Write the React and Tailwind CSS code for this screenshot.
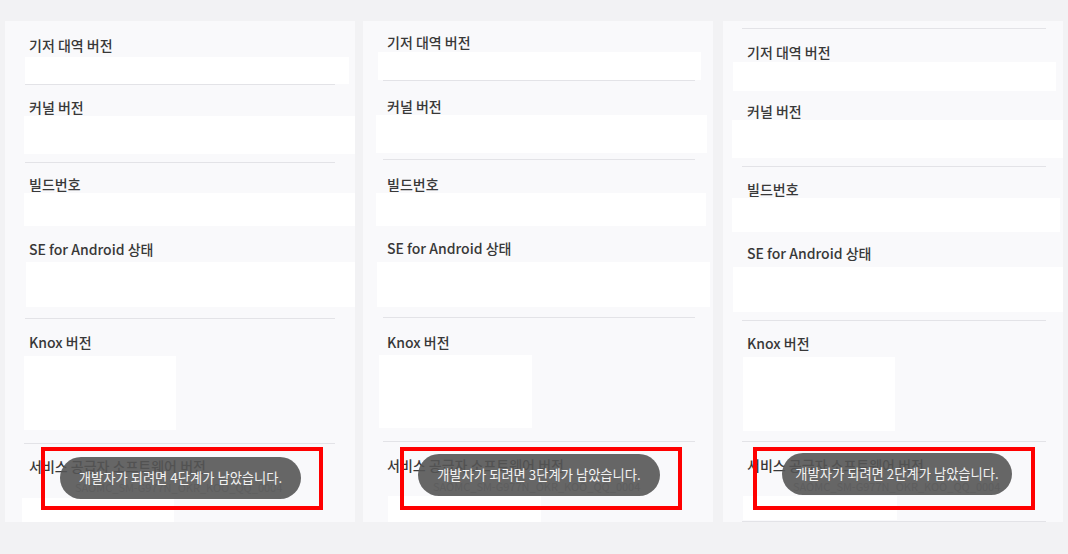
import React from 'react';

const font = { fontFamily: '"Noto Sans CJK KR", "Noto Sans", sans-serif' };

const Label = ({ children, className = '' }) => (
  <div className={`pl-[24px] text-[14px] leading-[18px] font-medium text-[#383838] whitespace-nowrap ${className}`}>
    {children}
  </div>
);

const Block = ({ className = '' }) => <div className={`bg-white shrink-0 ${className}`} />;

const Divider = ({ className = '' }) => <div className={`h-px bg-[#e3e3e7] shrink-0 ${className}`} />;

// toast pill, slightly see-through like the Android one
const Toast = ({ step, className = '' }) => (
  <div
    className={`absolute h-[42px] rounded-full bg-[#555555]/90 flex items-center justify-center text-[13.3px] text-[#f2f2f2] whitespace-nowrap ${className}`}
  >
    개발자가 되려면 {step}단계가 남았습니다.
  </div>
);

const Highlight = ({ className = '' }) => (
  <div className={`absolute w-[282px] h-[63px] border-[4px] border-[#ff0000] ${className}`} />
);

const Hint = ({ children, className = '' }) => (
  <div className={`text-[11px] leading-[13px] text-[#a8a8ad] whitespace-nowrap ${className}`}>{children}</div>
);

const PanelOne = () => (
  <div className="relative w-[350px] h-[501px] bg-[#f9f9fb] flex flex-col overflow-hidden">
    <Label className="mt-[15px]">기저 대역 버전</Label>
    <Block className="mt-[3px] h-[27px] ml-[20px] mr-[6px]" />
    <Divider className="ml-[20px] mr-[20px]" />
    <Label className="mt-[13px]">커널 버전</Label>
    <Block className="h-[38px] ml-[19px]" />
    <Divider className="mt-[8px] ml-[20px] mr-[20px]" />
    <Label className="mt-[12px]">빌드번호</Label>
    <Block className="h-[33px] ml-[19px]" />
    <Label className="mt-[14px]">SE for Android 상태</Label>
    <Block className="mt-[4px] h-[45px] ml-[21px]" />
    <Divider className="mt-[11px] ml-[20px] mr-[20px]" />
    <Label className="mt-[14px]">Knox 버전</Label>
    <Block className="mt-[5px] h-[74px] ml-[19px] w-[152px]" />
    <Divider className="mt-[13px] ml-[19px] mr-[20px]" />
    <Label className="mt-[13px]">서비스 공급자 소프트웨어 버전</Label>
    <Hint className="mt-[6px] pl-[70px]">SAOMC_SM-G977N_OKR_KOO_QQ_0004</Hint>
    <Block className="mt-[4px] h-[24px] ml-[17px] w-[152px]" />
    <Toast step={4} className="left-[55px] top-[436px] w-[241px]" />
    <Highlight className="left-[36px] top-[426px]" />
  </div>
);

const PanelTwo = () => (
  <div className="relative w-[350px] h-[501px] bg-[#f9f9fb] flex flex-col overflow-hidden">
    <Label className="mt-[12px]">기저 대역 버전</Label>
    <Block className="mt-[1px] h-[28px] ml-[15px] mr-[12px]" />
    <Divider className="ml-[20px] mr-[18px]" />
    <Label className="mt-[16px]">커널 버전</Label>
    <Block className="h-[38px] ml-[13px] mr-[6px]" />
    <Divider className="mt-[6px] ml-[20px] mr-[18px]" />
    <Label className="mt-[15px]">빌드번호</Label>
    <Block className="h-[33px] ml-[13px] mr-[7px]" />
    <Label className="mt-[13px]">SE for Android 상태</Label>
    <Block className="mt-[5px] h-[45px] ml-[14px] mr-[3px]" />
    <Divider className="mt-[10px] ml-[20px] mr-[18px]" />
    <Label className="mt-[15px]">Knox 버전</Label>
    <Block className="mt-[4px] h-[73px] ml-[16px] w-[153px]" />
    <Divider className="mt-[13px] ml-[20px] mr-[18px]" />
    <Label className="mt-[14px]">서비스 공급자 소프트웨어 버전</Label>
    <Hint className="mt-[6px] pl-[70px]">SAOMC_SM-G977N_OKR_KOO_QQ_0004</Hint>
    <Block className="mt-[3px] h-[30px] ml-[25px] w-[153px]" />
    <Toast step={3} className="left-[55px] top-[433px] w-[242px]" />
    <Highlight className="left-[37px] top-[426px]" />
  </div>
);

const PanelThree = () => (
  <div className="relative w-[340px] h-[501px] bg-[#f9f9fb] flex flex-col overflow-hidden">
    <Divider className="mt-[7px] ml-[19px] mr-[17px]" />
    <Label className="mt-[14px] pl-[23px]">기저 대역 버전</Label>
    <Block className="mt-[1px] h-[29px] ml-[10px] mr-[7px]" />
    <Label className="mt-[11px] pl-[23px]">커널 버전</Label>
    <Block className="h-[38px] ml-[9px]" />
    <Divider className="mt-[8px] ml-[19px] mr-[17px]" />
    <Label className="mt-[13px] pl-[23px]">빌드번호</Label>
    <Block className="h-[34px] ml-[9px] mr-[3px]" />
    <Label className="mt-[12px] pl-[23px]">SE for Android 상태</Label>
    <Block className="mt-[5px] h-[45px] ml-[10px]" />
    <Divider className="mt-[8px] ml-[19px] mr-[17px]" />
    <Label className="mt-[13px] pl-[23px]">Knox 버전</Label>
    <Block className="mt-[5px] h-[74px] ml-[20px] w-[152px]" />
    <Divider className="mt-[10px] ml-[19px] mr-[17px]" />
    <Label className="mt-[14px] pl-[23px]">서비스 공급자 소프트웨어 버전</Label>
    <Hint className="mt-[6px] pl-[70px]">SAOMC_SM-G977N_OKR_KOO_QQ_0004</Hint>
    <Block className="mt-[3px] h-[24px] ml-[20px] w-[154px]" />
    <Divider className="mt-[1px] ml-[19px] mr-[17px]" />
    <Toast step={2} className="left-[59px] top-[432px] w-[230px]" />
    <Highlight className="left-[30px] top-[426px]" />
  </div>
);

export default function App() {
  return (
    <div style={font} className="w-[1068px] h-[554px] bg-[#f2f2f4] flex items-start pt-[21px] pl-[5px] overflow-hidden">
      <PanelOne />
      <div className="w-[8px] shrink-0" />
      <PanelTwo />
      <div className="w-[10px] shrink-0" />
      <PanelThree />
    </div>
  );
}
